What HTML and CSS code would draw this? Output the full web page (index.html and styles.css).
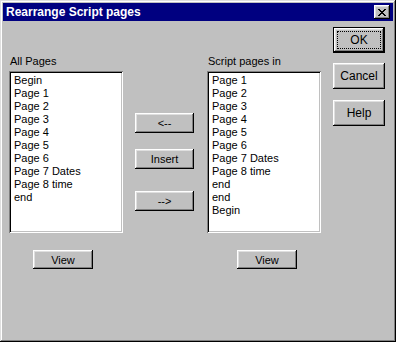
FILE: index.html
```html
<!DOCTYPE html>
<html lang="en">
<head>
  <meta charset="UTF-8">
  <title>Rearrange Script pages</title>
  <link rel="stylesheet" href="styles.css">
</head>
<body>
  <div class="window">
    <!-- Barra de título -->
    <div class="titlebar">
      <span class="title">Rearrange Script pages</span>
      <span class="close-btn">
        <svg width="8" height="7" viewBox="0 0 8 7" shape-rendering="crispEdges">
          <path d="M0 0h2v1h-2zM6 0h2v1h-2zM1 1h2v1h-2zM5 1h2v1h-2zM2 2h4v1h-4zM3 3h2v1h-2zM2 4h4v1h-4zM1 5h2v1h-2zM5 5h2v1h-2zM0 6h2v1h-2zM6 6h2v1h-2z" fill="#000"/>
        </svg>
      </span>
    </div>

    <div class="content">
      <!-- Lista de la izquierda -->
      <div class="panel">
        <div class="label">All Pages</div>
        <ul class="listbox">
          <li>Begin</li>
          <li>Page 1</li>
          <li>Page 2</li>
          <li>Page 3</li>
          <li>Page 4</li>
          <li>Page 5</li>
          <li>Page 6</li>
          <li>Page 7 Dates</li>
          <li>Page 8 time</li>
          <li>end</li>
        </ul>
        <button class="btn view-btn">View</button>
      </div>

      <!-- Botones de movimiento -->
      <div class="middle">
        <button class="btn move-btn">&lt;--</button>
        <button class="btn move-btn insert">Insert</button>
        <button class="btn move-btn last">--&gt;</button>
      </div>

      <!-- Lista de la derecha -->
      <div class="panel right-panel">
        <div class="label">Script pages in</div>
        <ul class="listbox">
          <li>Page 1</li>
          <li>Page 2</li>
          <li>Page 3</li>
          <li>Page 4</li>
          <li>Page 5</li>
          <li>Page 6</li>
          <li>Page 7 Dates</li>
          <li>Page 8 time</li>
          <li>end</li>
          <li>end</li>
          <li>Begin</li>
        </ul>
        <button class="btn view-btn">View</button>
      </div>

      <!-- Botones del diálogo -->
      <div class="actions">
        <button class="btn dlg-btn default"><span class="focus">OK</span></button>
        <button class="btn dlg-btn">Cancel</button>
        <button class="btn dlg-btn help">Help</button>
      </div>
    </div>
  </div>
</body>
</html>
```

FILE: styles.css
```css
/* Ventana estilo Windows 95 */
body {
  margin: 0;
  background: #c0c0c0;
  font-family: "Liberation Sans", Arial, sans-serif;
  font-size: 11px;
  color: #000;
}

.window {
  width: 396px;
  height: 342px;
  box-sizing: border-box;
  padding: 3px;
  background: #c0c0c0;
  box-shadow: inset -1px -1px #000, inset 1px 1px #dfdfdf,
              inset -2px -2px #808080, inset 2px 2px #fff;
}

.titlebar {
  height: 18px;
  background: #000080;
  display: flex;
  align-items: center;
  justify-content: space-between;
  padding: 0 3px;
}

.title {
  color: #fff;
  font-weight: bold;
  font-size: 12px;
}

.close-btn {
  width: 16px;
  height: 14px;
  box-sizing: border-box;
  background: #c0c0c0;
  display: flex;
  align-items: center;
  justify-content: center;
  box-shadow: inset -1px -1px #000, inset 1px 1px #fff,
              inset -2px -2px #808080, inset 2px 2px #dfdfdf;
}

.content {
  display: flex;
  padding-top: 6px;
}

.panel {
  margin-left: 6px;
  width: 114px;
  padding-top: 28px;
}

.right-panel {
  margin-left: 13px;
}

.label {
  height: 16px;
  line-height: 13px;
  padding-left: 1px;
}

.listbox {
  list-style: none;
  margin: 0;
  width: 114px;
  height: 162px;
  box-sizing: border-box;
  padding: 3px 5px;
  background: #fff;
  box-shadow: inset 1px 1px #808080, inset -1px -1px #fff,
              inset 2px 2px #000, inset -2px -2px #c0c0c0;
}

.listbox li {
  line-height: 13px;
  height: 13px;
}

.btn {
  font-family: "Liberation Sans", Arial, sans-serif;
  font-size: 11px;
  color: #000;
  background: #c0c0c0;
  border: none;
  padding: 0;
  display: block;
  box-shadow: inset -1px -1px #000, inset 1px 1px #fff,
              inset -2px -2px #808080, inset 2px 2px #dfdfdf;
}

.view-btn {
  width: 60px;
  height: 19px;
  margin: 17px 0 0 24px;
}

.right-panel .view-btn {
  margin-left: 30px;
}

.middle {
  margin-left: 12px;
  padding-top: 86px;
}

.move-btn {
  width: 59px;
  height: 20px;
}

.insert {
  margin-top: 16px;
}

.last {
  margin-top: 22px;
}

.actions {
  margin-left: 12px;
}

.dlg-btn {
  width: 52px;
  height: 26px;
  font-size: 12px;
}

.dlg-btn + .dlg-btn {
  margin-top: 10px;
}

.dlg-btn.help {
  margin-top: 11px;
}

.default {
  box-shadow: inset 0 0 0 1px #000, inset -2px -2px #000, inset 2px 2px #fff,
              inset -3px -3px #808080, inset 3px 3px #dfdfdf;
  display: flex;
  padding: 4px;
}

.focus {
  flex: 1;
  display: flex;
  align-items: center;
  justify-content: center;
  border: 1px dotted #000;
}
```
